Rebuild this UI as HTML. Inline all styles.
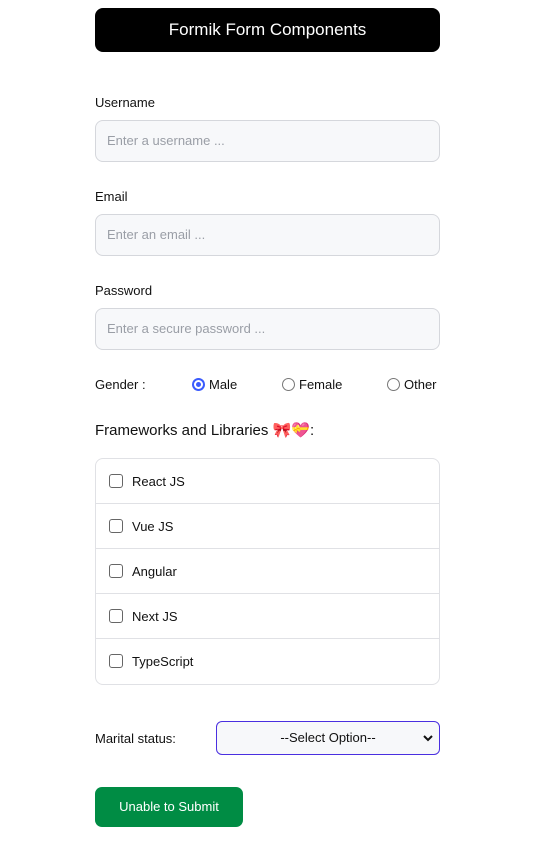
<!DOCTYPE html>
<html><head><style>
*{box-sizing:border-box;margin:0;padding:0}
body{width:542px;height:865px;background:#fff;font-family:"Liberation Sans",sans-serif;color:#111;position:relative;overflow:hidden}
.abs{position:absolute}
.title{left:95px;top:8px;width:345px;height:44px;background:#000;border-radius:8px;color:#fff;font-size:17px;text-align:center;line-height:44px}
.lbl{left:95px;font-size:13px}
.inp{left:95px;width:345px;height:42px;background:#f7f8fa;border:1px solid #d5d7dc;border-radius:8px;font-size:13px;color:#9a9ea6;padding-left:11px;line-height:40px}
.radio{width:13px;height:13px;border:1px solid #777;border-radius:50%;display:inline-block;vertical-align:-2px;margin-right:4px;position:relative}
.radio.on{border:2px solid #3b5bfd}
.radio.on:after{content:"";position:absolute;left:2px;top:2px;width:5px;height:5px;border-radius:50%;background:#3b5bfd}
.box{left:95px;top:458px;width:345px;height:227px;border:1px solid #e0e1e5;border-radius:8px}
.row{height:45px;border-bottom:1px solid #e0e1e5;font-size:13px;line-height:45px;padding-left:13px}
.row:last-child{border-bottom:none}
.cb{display:inline-block;width:14px;height:14px;border:1.5px solid #666;border-radius:3px;vertical-align:-2px;margin-right:9px}
</style></head><body>
<div class="abs title">Formik Form Components</div>
<div class="abs lbl" style="top:95px">Username</div>
<div class="abs inp" style="top:120px">Enter a username ...</div>
<div class="abs lbl" style="top:189px">Email</div>
<div class="abs inp" style="top:214px">Enter an email ...</div>
<div class="abs lbl" style="top:283px">Password</div>
<div class="abs inp" style="top:308px">Enter a secure password ...</div>
<div class="abs lbl" style="top:377px">Gender :</div>
<div class="abs" style="left:192px;top:377px;font-size:13px"><span class="radio on"></span>Male</div>
<div class="abs" style="left:282px;top:377px;font-size:13px"><span class="radio"></span>Female</div>
<div class="abs" style="left:387px;top:377px;font-size:13px"><span class="radio"></span>Other</div>
<div class="abs" style="left:95px;top:421px;font-size:15px">Frameworks and Libraries <span style="color:#e07aa0">🎀</span><span style="color:#e8447a">💝</span>:</div>
<div class="abs box">
<div class="row"><span class="cb"></span>React JS</div>
<div class="row"><span class="cb"></span>Vue JS</div>
<div class="row"><span class="cb"></span>Angular</div>
<div class="row"><span class="cb"></span>Next JS</div>
<div class="row"><span class="cb"></span>TypeScript</div>
</div>
<div class="abs lbl" style="top:731px">Marital status:</div>
<div class="abs" style="left:216px;top:721px;width:224px;height:34px;border:1px solid #4a2fe0;border-radius:6px;background:#f7f8fa;font-size:13px;text-align:center;line-height:32px">--Select Option--<svg style="position:absolute;right:6px;top:12px" width="10" height="8" viewBox="0 0 10 8"><path d="M1 2 L5 6 L9 2" stroke="#111" stroke-width="2" fill="none"/></svg></div>
<div class="abs" style="left:95px;top:787px;width:148px;height:40px;background:#008c44;border-radius:7px;color:#fff;font-size:13px;text-align:center;line-height:40px">Unable to Submit</div>
</body></html>
